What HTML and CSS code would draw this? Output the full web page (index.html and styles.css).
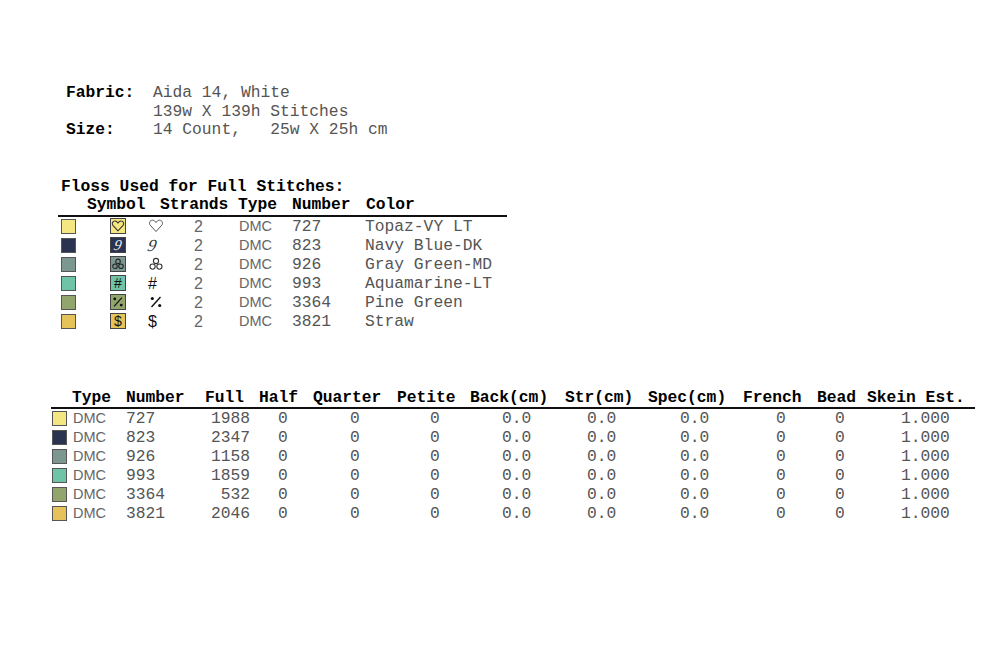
FILE: index.html
```html
<!DOCTYPE html>
<html>
<head>
<meta charset="utf-8">
<link rel="stylesheet" href="styles.css">
</head>
<body>
<div class="page">
  <div class="info">
    <div class="lbl">Fabric:</div><div class="val">Aida 14, White</div>
    <div class="lbl"></div><div class="val">139w X 139h Stitches</div>
    <div class="lbl">Size:</div><div class="val">14 Count,   25w X 25h cm</div>
  </div>

  <div class="floss">
    <div class="title">Floss Used for Full Stitches:</div>
    <div class="fhead">
      <div></div><div>Symbol</div><div>Strands</div><div>Type</div><div>Number</div><div>Color</div>
    </div>
    <div class="frow">
      <div><span class="sw c727"></span></div>
      <div><span class="box c727"><svg viewBox="0 0 16 16" width="14" height="14"><path d="M8 13.5 L2.2 7.2 C0.6 5.2 1.8 2.2 4.5 2.2 C6.2 2.2 7.3 3.4 8 4.6 C8.7 3.4 9.8 2.2 11.5 2.2 C14.2 2.2 15.4 5.2 13.8 7.2 Z" fill="none" stroke="#333" stroke-width="1.2"/></svg></span></div>
      <div class="gl"><svg viewBox="0 0 16 16" width="16" height="16"><path d="M8 13.5 L2.2 7.2 C0.6 5.2 1.8 2.2 4.5 2.2 C6.2 2.2 7.3 3.4 8 4.6 C8.7 3.4 9.8 2.2 11.5 2.2 C14.2 2.2 15.4 5.2 13.8 7.2 Z" fill="none" stroke="#555" stroke-width="1"/></svg></div>
      <div class="st">2</div><div class="ty">DMC</div><div>727</div><div>Topaz-VY LT</div>
    </div>
    <div class="frow">
      <div><span class="sw c823"></span></div>
      <div><span class="box c823"><span class="nine light">9</span></span></div>
      <div class="gl"><span class="nine">9</span></div>
      <div class="st">2</div><div class="ty">DMC</div><div>823</div><div>Navy Blue-DK</div>
    </div>
    <div class="frow">
      <div><span class="sw c926"></span></div>
      <div><span class="box c926"><svg viewBox="0 0 16 16" width="14" height="14"><g fill="none" stroke="#222" stroke-width="1.2"><circle cx="8" cy="5" r="2.6"/><circle cx="4.6" cy="10.6" r="2.6"/><circle cx="11.4" cy="10.6" r="2.6"/></g></svg></span></div>
      <div class="gl"><svg viewBox="0 0 16 16" width="16" height="16"><g fill="none" stroke="#333" stroke-width="1.1"><circle cx="8" cy="5" r="2.6"/><circle cx="4.6" cy="10.6" r="2.6"/><circle cx="11.4" cy="10.6" r="2.6"/></g></svg></div>
      <div class="st">2</div><div class="ty">DMC</div><div>926</div><div>Gray Green-MD</div>
    </div>
    <div class="frow">
      <div><span class="sw c993"></span></div>
      <div><span class="box c993"><span class="sym">#</span></span></div>
      <div class="gl"><span class="sym">#</span></div>
      <div class="st">2</div><div class="ty">DMC</div><div>993</div><div>Aquamarine-LT</div>
    </div>
    <div class="frow">
      <div><span class="sw c3364"></span></div>
      <div><span class="box c3364"><svg viewBox="0 0 16 16" width="14" height="14"><path d="M12.5 3 L3.5 13" stroke="#111" stroke-width="1.4"/><circle cx="4.3" cy="4.5" r="1.6" fill="#111"/><circle cx="11.7" cy="11.5" r="1.6" fill="#111"/></svg></span></div>
      <div class="gl"><svg viewBox="0 0 16 16" width="16" height="16"><path d="M12.5 3 L3.5 13" stroke="#111" stroke-width="1.4"/><circle cx="4.3" cy="4.5" r="1.6" fill="#111"/><circle cx="11.7" cy="11.5" r="1.6" fill="#111"/></svg></div>
      <div class="st">2</div><div class="ty">DMC</div><div>3364</div><div>Pine Green</div>
    </div>
    <div class="frow">
      <div><span class="sw c3821"></span></div>
      <div><span class="box c3821"><span class="sym">$</span></span></div>
      <div class="gl"><span class="sym">$</span></div>
      <div class="st">2</div><div class="ty">DMC</div><div>3821</div><div>Straw</div>
    </div>
  </div>

  <div class="usage">
    <div class="uhead">
      <div></div><div>Type</div><div>Number</div><div>Full</div><div>Half</div><div>Quarter</div><div>Petite</div><div>Back(cm)</div><div>Str(cm)</div><div>Spec(cm)</div><div>French</div><div>Bead</div><div>Skein Est.</div>
    </div>
    <div class="urow">
      <div><span class="sw c727"></span></div><div class="ty">DMC</div><div>727</div><div>1988</div><div>0</div><div>0</div><div>0</div><div>0.0</div><div>0.0</div><div>0.0</div><div>0</div><div>0</div><div>1.000</div>
    </div>
    <div class="urow">
      <div><span class="sw c823"></span></div><div class="ty">DMC</div><div>823</div><div>2347</div><div>0</div><div>0</div><div>0</div><div>0.0</div><div>0.0</div><div>0.0</div><div>0</div><div>0</div><div>1.000</div>
    </div>
    <div class="urow">
      <div><span class="sw c926"></span></div><div class="ty">DMC</div><div>926</div><div>1158</div><div>0</div><div>0</div><div>0</div><div>0.0</div><div>0.0</div><div>0.0</div><div>0</div><div>0</div><div>1.000</div>
    </div>
    <div class="urow">
      <div><span class="sw c993"></span></div><div class="ty">DMC</div><div>993</div><div>1859</div><div>0</div><div>0</div><div>0</div><div>0.0</div><div>0.0</div><div>0.0</div><div>0</div><div>0</div><div>1.000</div>
    </div>
    <div class="urow">
      <div><span class="sw c3364"></span></div><div class="ty">DMC</div><div>3364</div><div>532</div><div>0</div><div>0</div><div>0</div><div>0.0</div><div>0.0</div><div>0.0</div><div>0</div><div>0</div><div>1.000</div>
    </div>
    <div class="urow">
      <div><span class="sw c3821"></span></div><div class="ty">DMC</div><div>3821</div><div>2046</div><div>0</div><div>0</div><div>0</div><div>0.0</div><div>0.0</div><div>0.0</div><div>0</div><div>0</div><div>1.000</div>
    </div>
  </div>
</div>
</body>
</html>
```

FILE: styles.css
```css
html, body {
  margin: 0;
  padding: 0;
  background: #fff;
}
.page {
  font-family: "Liberation Mono", "Courier New", monospace;
  font-size: 16.3px;
  color: #555;
  padding-top: 84px;
}
.page div {
  white-space: nowrap;
}

/* fabric info */
.info {
  display: grid;
  grid-template-columns: 87px auto;
  margin-left: 66px;
  line-height: 18.5px;
  width: max-content;
}
.lbl {
  font-weight: bold;
  color: #000;
  min-height: 18.5px;
}
.info .val {
  white-space: pre;
}

/* floss list */
.floss {
  margin-top: 38px;
  margin-left: 58px;
  width: 449px;
}
.title {
  font-weight: bold;
  color: #000;
  line-height: 18.5px;
  padding-left: 3px;
}
.fhead {
  display: grid;
  grid-template-columns: 29px 73px 78px 54px 74px 1fr;
  font-weight: bold;
  color: #000;
  line-height: 18.5px;
  border-bottom: 2px solid #111;
}
.frow {
  display: grid;
  grid-template-columns: 42px 40px 45px 50px 55px 74px 1fr;
  height: 19px;
  line-height: 19px;
  align-items: center;
}
.frow > :nth-child(1) { padding-left: 3px; }
.frow > :nth-child(2) { padding-left: 10px; }
.frow > :nth-child(3) { padding-left: 8px; }
.frow > :nth-child(4) { padding-left: 9px; }
.frow > :nth-child(5) { padding-left: 4px; }
.frow > :nth-child(6) { padding-left: 2px; }
.frow > :nth-child(7) { padding-left: 1px; }

.sw {
  display: block;
  width: 13px;
  height: 13px;
  border: 1px solid #555;
}
.box {
  display: flex;
  align-items: center;
  justify-content: center;
  width: 14px;
  height: 14px;
  border: 1px solid #444;
  line-height: 14px;
}
.gl {
  display: flex;
  align-items: center;
  height: 19px;
}
.st, .ty {
  font-family: "Liberation Sans", Arial, sans-serif;
  font-size: 14.5px;
  color: #666;
}
.st { font-size: 16px; }
.sym {
  font-family: "Liberation Sans", Arial, sans-serif;
  font-size: 14px;
  color: #111;
}
.gl .sym { font-size: 16px; }
.nine {
  display: inline-block;
  font-family: "Liberation Serif", "Times New Roman", serif;
  font-style: italic;
  font-size: 15px;
  color: #333;
  transform: skewX(-12deg);
}
.gl .nine { font-size: 17px; }
.nine.light { color: #e8ecf5; }

.c727 { background: #f4e680; }
.c823 { background: #2a3450; }
.c926 { background: #7b978f; }
.c993 { background: #6fc3a7; }
.c3364 { background: #92a56c; }
.c3821 { background: #e5c25a; }

/* usage table */
.usage {
  margin-top: 58px;
  margin-left: 51px;
  width: 924px;
}
.uhead, .urow {
  display: grid;
  grid-template-columns: 21px 54px 79px 54px 54px 84px 73px 95px 83px 95px 74px 50px 108px;
}
.uhead {
  font-weight: bold;
  color: #000;
  line-height: 18.5px;
  border-bottom: 2px solid #111;
}
.urow {
  height: 19px;
  line-height: 19px;
  align-items: center;
}
.urow > :nth-child(1) { padding-left: 1px; }
.urow > :nth-child(2) { padding-left: 1px; }
.urow > :nth-child(3) { padding-left: 0; }
.urow > :nth-child(4) { text-align: right; padding-right: 9px; }
.urow > :nth-child(5) { padding-left: 19px; }
.urow > :nth-child(6) { padding-left: 37px; }
.urow > :nth-child(7) { padding-left: 33px; }
.urow > :nth-child(8) { padding-left: 32px; }
.urow > :nth-child(9) { padding-left: 22px; }
.urow > :nth-child(10) { padding-left: 32px; }
.urow > :nth-child(11) { padding-left: 33px; }
.urow > :nth-child(12) { padding-left: 18px; }
.urow > :nth-child(13) { padding-left: 34px; }
```
